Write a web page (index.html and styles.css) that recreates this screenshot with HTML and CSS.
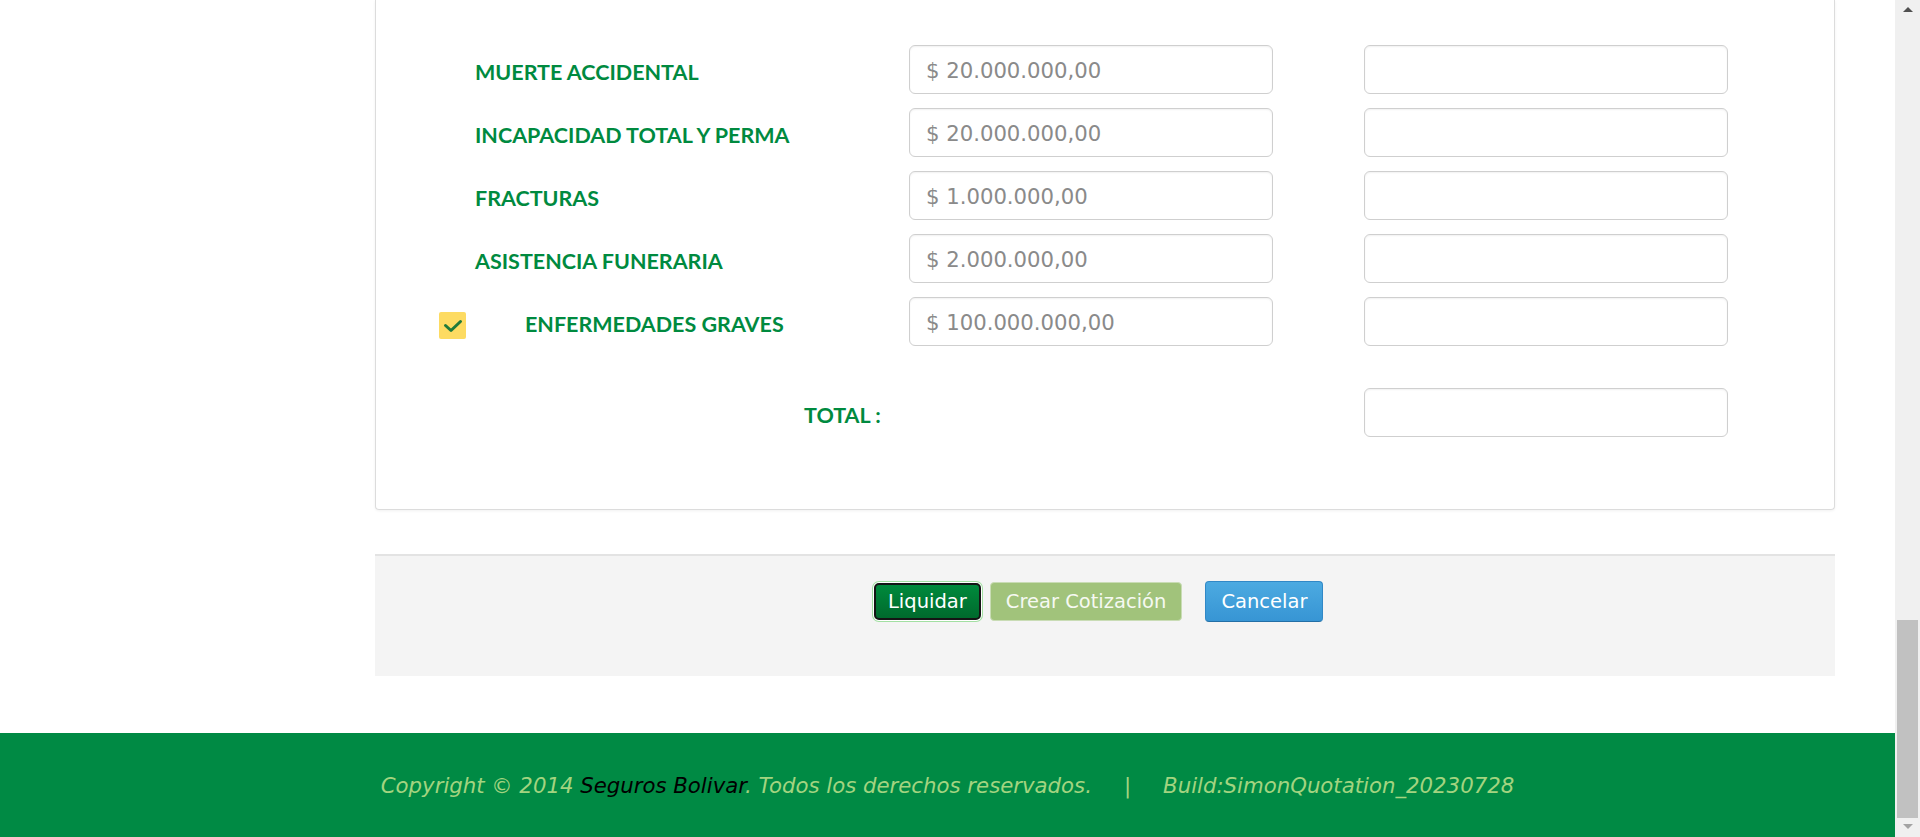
FILE: index.html
```html
<!DOCTYPE html>
<html lang="es">
<head>
<meta charset="utf-8">
<title>Cotización</title>
<link rel="stylesheet" href="styles.css">
</head>
<body>
<div class="page">
  <div class="main">
    <section class="card">
      <div class="row">
        <div class="label-cell"><span class="label">MUERTE ACCIDENTAL</span></div>
        <input class="field" type="text" value="$ 20.000.000,00" readonly>
        <input class="field field-right" type="text" readonly>
      </div>
      <div class="row">
        <div class="label-cell"><span class="label">INCAPACIDAD TOTAL Y PERMA</span></div>
        <input class="field" type="text" value="$ 20.000.000,00" readonly>
        <input class="field field-right" type="text" readonly>
      </div>
      <div class="row">
        <div class="label-cell"><span class="label">FRACTURAS</span></div>
        <input class="field" type="text" value="$ 1.000.000,00" readonly>
        <input class="field field-right" type="text" readonly>
      </div>
      <div class="row">
        <div class="label-cell"><span class="label">ASISTENCIA FUNERARIA</span></div>
        <input class="field" type="text" value="$ 2.000.000,00" readonly>
        <input class="field field-right" type="text" readonly>
      </div>
      <div class="row">
        <div class="label-cell label-cell-check">
          <span class="check">
            <svg width="20" height="14" viewBox="0 0 20 14"><path d="M2.5 6.5 L8 11.5 L17.5 2.5" fill="none" stroke="#1f7a3a" stroke-width="3" stroke-linecap="round" stroke-linejoin="round"/></svg>
          </span>
          <span class="label">ENFERMEDADES GRAVES</span>
        </div>
        <input class="field" type="text" value="$ 100.000.000,00" readonly>
        <input class="field field-right" type="text" readonly>
      </div>
      <div class="row row-total">
        <div class="label-cell label-cell-total"><span class="label">TOTAL :</span></div>
        <div class="spacer"></div>
        <input class="field field-right" type="text" readonly>
      </div>
    </section>

    <div class="actions">
      <button class="btn btn-liquidar" type="button">Liquidar</button>
      <button class="btn btn-crear" type="button">Crear Cotización</button>
      <button class="btn btn-cancelar" type="button">Cancelar</button>
    </div>

    <footer class="footer">
      <p class="footer-text">Copyright © 2014 <span class="brand">Seguros Bolivar</span>. Todos los derechos reservados.<span class="sep">|</span>Build:SimonQuotation_20230728</p>
    </footer>
  </div>
  <div class="scrollbar">
    <span class="arrow arrow-up"></span>
    <span class="track"><span class="thumb"></span></span>
    <span class="arrow arrow-down"></span>
  </div>
</div>
</body>
</html>
```
FILE: styles.css
```css
html, body {
  margin: 0;
  padding: 0;
  height: 100%;
  overflow: hidden;
  background: #ffffff;
}

.page {
  display: flex;
  height: 837px;
  width: 1920px;
}

.main {
  flex: 1;
  display: flex;
  flex-direction: column;
  overflow: hidden;
}

/* ---------- card ---------- */
.card {
  flex-shrink: 0;
  margin-left: 375px;
  width: 1458px;
  padding: 45px 0 72px 0;
  background: #fff;
  border: 1px solid #dcdcdc;
  border-top: none;
  border-radius: 0 0 4px 4px;
  box-shadow: 0 1px 3px rgba(0, 0, 0, 0.06);
}

.row {
  display: flex;
  align-items: center;
  height: 49px;
  margin-bottom: 14px;
}

.row:nth-last-child(2) {
  margin-bottom: 41px;
}

.row-total {
  margin-bottom: 0;
  height: 50px;
}

.label-cell {
  width: 533px;
  box-sizing: border-box;
  padding-left: 99px;
  padding-top: 5px;
  display: flex;
  align-items: center;
}

.label-cell-check {
  padding-left: 63px;
  padding-top: 0;
}

.label-cell-check .label {
  margin-left: 59px;
  padding-top: 5px;
}

.label-cell-total {
  padding-left: 428px;
  padding-top: 6px;
}

.label {
  font-family: Lato, "Liberation Sans", sans-serif;
  font-weight: 700;
  font-size: 21.5px;
  color: #008a3f;
  white-space: nowrap;
}

.check {
  width: 27px;
  height: 27px;
  margin-top: 8px;
  background: #fddb62;
  display: flex;
  align-items: center;
  justify-content: center;
  border-radius: 2px;
}

.field {
  width: 364px;
  height: 49px;
  box-sizing: border-box;
  border: 1px solid #cfcfcf;
  border-radius: 6px;
  padding: 2px 16px 0 16px;
  font-family: "DejaVu Sans", Verdana, sans-serif;
  font-size: 21.2px;
  color: #8a8a8a;
  background: #fff;
  box-shadow: inset 0 1px 2px rgba(0, 0, 0, 0.06);
  outline: none;
  margin: 0;
}

.field-right {
  margin-left: 91px;
}

.spacer {
  width: 364px;
}

/* ---------- actions ---------- */
.actions {
  flex-shrink: 0;
  margin: 44px 0 0 375px;
  width: 1460px;
  box-sizing: border-box;
  background: #f4f4f4;
  border-top: 2px solid #e3e3e3;
  height: 122px;
  padding: 25px 0 0 499px;
  display: flex;
  align-items: flex-start;
}

.btn {
  font-family: "DejaVu Sans", Verdana, sans-serif;
  font-size: 19.5px;
  color: #fff;
  padding: 0 14px;
  margin: 0;
  cursor: pointer;
  line-height: 1;
}

.btn-liquidar {
  height: 37px;
  margin-top: 2px;
  padding: 0 12px;
  border: 2px solid #151515;
  border-radius: 5px;
  background: linear-gradient(#008a3c, #006a2d);
  box-shadow: 0 0 0 1px #ffffff, 0 0 0 2px #a3e0a3;
}

.btn-crear {
  height: 39px;
  margin-top: 1px;
  margin-left: 9px;
  border: 1px solid #c9dcb5;
  border-radius: 4px;
  background: #a1c37b;
  color: #f6f9f2;
  padding: 0 15px;
}

.btn-cancelar {
  height: 41px;
  margin-left: 23px;
  border: 1px solid #3188c6;
  border-bottom-color: #236fa6;
  border-radius: 4px;
  background: linear-gradient(#4caae1, #3795d4);
  padding: 0 15px;
}

/* ---------- footer ---------- */
.footer {
  margin-top: 57px;
  background: #008a44;
  height: 140px;
  flex-shrink: 0;
  padding-top: 40px;
  box-sizing: border-box;
}

.footer-text {
  margin: 0;
  text-align: center;
  font-family: "DejaVu Sans", Verdana, sans-serif;
  font-style: italic;
  font-size: 21.25px;
  color: #a3d480;
  white-space: nowrap;
}

.brand {
  color: #000;
}

.sep {
  display: inline-block;
  margin: 0 32px;
  font-style: normal;
}

/* ---------- fake scrollbar ---------- */
.scrollbar {
  width: 25px;
  flex-shrink: 0;
  background: #f0f0f0;
  display: flex;
  flex-direction: column;
  align-items: center;
}

.arrow {
  width: 0;
  height: 0;
  border-left: 5px solid transparent;
  border-right: 5px solid transparent;
}

.arrow-up {
  margin-top: 7px;
  border-bottom: 5px solid #505050;
}

.track {
  flex: 1;
  width: 21px;
  display: flex;
  flex-direction: column;
  justify-content: flex-end;
  padding-bottom: 6px;
}

.thumb {
  height: 198px;
  background: #c1c1c1;
}

.arrow-down {
  margin-bottom: 8px;
  border-top: 5px solid #a3a3a3;
}
```
